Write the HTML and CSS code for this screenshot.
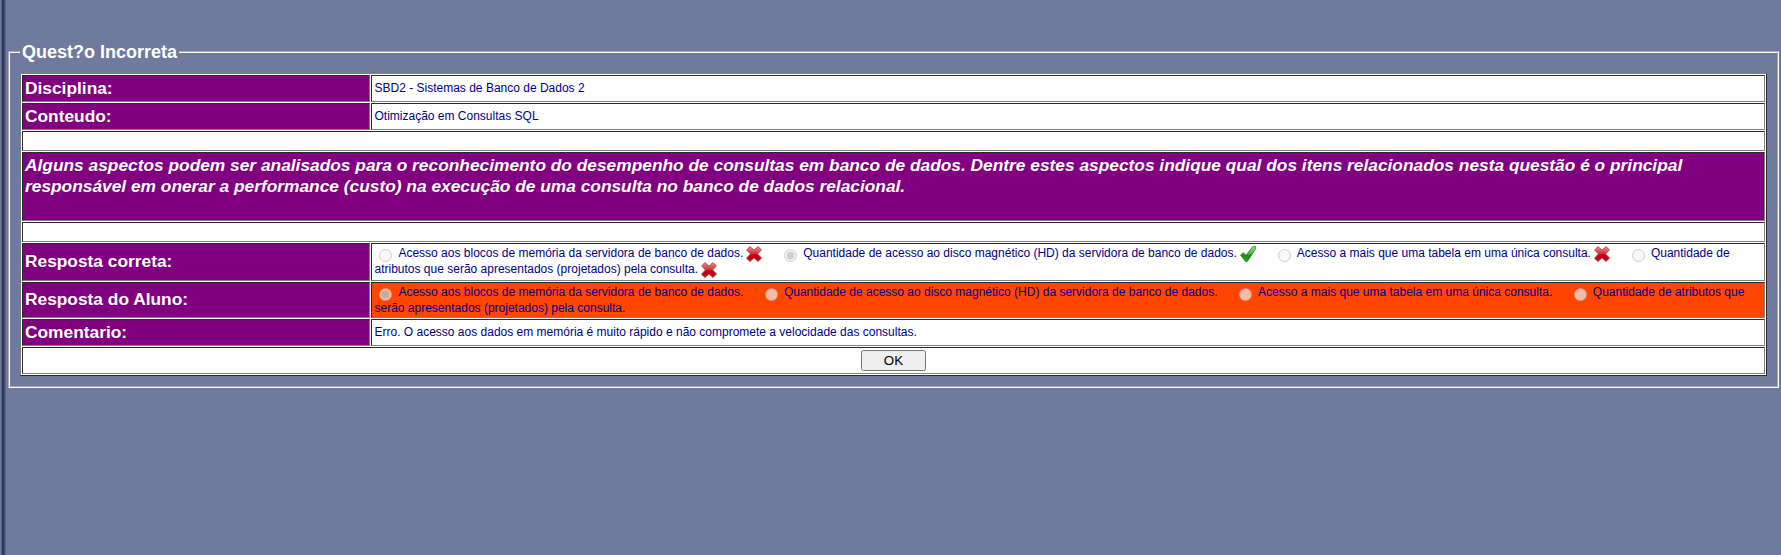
FILE: index.html
```html
<!DOCTYPE html>
<html lang="pt-BR">
<head>
<meta charset="utf-8">
<title>Questão Incorreta</title>
<link rel="stylesheet" href="styles.css">
</head>
<body>
<svg class="defs" aria-hidden="true">
  <defs>
    <linearGradient id="red" x1="0" y1="0" x2="0" y2="1"><stop offset="0" stop-color="#f08a8a"/><stop offset=".45" stop-color="#d8343c"/><stop offset=".55" stop-color="#c40010"/><stop offset="1" stop-color="#c80812"/></linearGradient>
    <linearGradient id="green" x1="0" y1="0" x2="0" y2="1"><stop offset="0" stop-color="#9adf92"/><stop offset=".5" stop-color="#3fb52e"/><stop offset=".6" stop-color="#109400"/><stop offset="1" stop-color="#21a812"/></linearGradient>
    <symbol id="cross" viewBox="0 0 16 16"><path d="M4 .6 8 4 12 .6 15.5 3.8 11.6 8 15.6 12 12 15.6 8 12 4 15.6.4 12.2 4.4 8 .5 3.9Z" fill="url(#red)" stroke="#8c5656" stroke-width=".8" stroke-linejoin="round"/></symbol>
    <symbol id="check" viewBox="0 0 16 16"><path d="M.5 9 3.4 6.6 6 9.2 12.8.6 15.7.5 15.6 3 7.4 15.4 5.4 15.4Z" fill="url(#green)" stroke="#4c7048" stroke-width=".8" stroke-linejoin="round"/></symbol>
  </defs>
</svg>
<form class="page">
  <fieldset class="panel">
    <legend class="title">Quest?o Incorreta</legend>
    <table class="grid">
      <colgroup><col class="col-label"><col></colgroup>
      <tr><td class="label">Disciplina:</td><td>SBD2 - Sistemas de Banco de Dados 2</td></tr>
      <tr><td class="label">Conteudo:</td><td>Otimização em Consultas SQL</td></tr>
      <tr class="spacer"><td colspan="2"></td></tr>
      <tr class="question"><td class="label" colspan="2">Alguns aspectos podem ser analisados para o reconhecimento do desempenho de consultas em banco de dados. Dentre estes aspectos indique qual dos itens relacionados nesta questão é o principal responsável em onerar a performance (custo) na execução de uma consulta no banco de dados relacional.</td></tr>
      <tr class="spacer"><td colspan="2"></td></tr>
      <tr class="correct"><td class="label">Resposta correta:</td><td class="options"><input class="radio" type="radio" disabled>&nbsp;Acesso aos blocos de memória da servidora de banco de dados.&nbsp;<svg class="mark"><use href="#cross"/></svg>&nbsp;&nbsp;&nbsp;&nbsp; <input class="radio" type="radio" disabled checked>&nbsp;Quantidade de acesso ao disco magnético (HD) da servidora de banco de dados.&nbsp;<svg class="mark"><use href="#check"/></svg>&nbsp;&nbsp;&nbsp;&nbsp; <input class="radio" type="radio" disabled>&nbsp;Acesso a mais que uma tabela em uma única consulta.&nbsp;<svg class="mark"><use href="#cross"/></svg>&nbsp;&nbsp;&nbsp;&nbsp; <input class="radio" type="radio" disabled>&nbsp;Quantidade de<br>atributos que serão apresentados (projetados) pela consulta.&nbsp;<svg class="mark"><use href="#cross"/></svg></td></tr>
      <tr class="student"><td class="label">Resposta do Aluno:</td><td class="options wrong"><input class="radio" type="radio" disabled checked>&nbsp;Acesso aos blocos de memória da servidora de banco de dados.&nbsp;&nbsp;&nbsp;&nbsp; <input class="radio" type="radio" disabled>&nbsp;Quantidade de acesso ao disco magnético (HD) da servidora de banco de dados.&nbsp;&nbsp;&nbsp;&nbsp; <input class="radio" type="radio" disabled>&nbsp;Acesso a mais que uma tabela em uma única consulta.&nbsp;&nbsp;&nbsp;&nbsp; <input class="radio" type="radio" disabled>&nbsp;Quantidade de atributos que<br>serão apresentados (projetados) pela consulta.</td></tr>
      <tr><td class="label">Comentario:</td><td>Erro. O acesso aos dados em memória é muito rápido e não compromete a velocidade das consultas.</td></tr>
      <tr><td class="actions" colspan="2"><button class="ok" type="button">OK</button></td></tr>
    </table>
  </fieldset>
</form>
</body>
</html>
```

FILE: styles.css
```css
html {
  min-height: 100%;
  background: linear-gradient(90deg, #6f7a9c 0 1px, #59627f 1px 2px, #2f3757 2px 4px, #49527a 4px 5px, #5c658b 5px 6px, #707a9e 6px);
}
body {
  margin: 0;
  font-family: "Liberation Sans", Arial, sans-serif;
  font-size: 12px;
  color: #00008b;
}
.defs { position: absolute; width: 0; height: 0; }
.page { padding: 42px 2px 0 8px; }
.panel {
  margin: 0;
  padding: 11px 10px 10px;
  border: 2px groove #fffaf2;
}
.title {
  padding: 0 2px;
  font-size: 18px;
  line-height: 20px;
  font-weight: bold;
  color: #fff;
}
.grid {
  width: 100%;
  table-layout: fixed;
  border: 1px solid;
  border-color: #808080 #2c2c2c #2c2c2c #808080;
  border-spacing: 1px;
  background: #fff;
}
.col-label { width: 348px; }
.grid td {
  box-sizing: border-box;
  height: 27px;
  padding: 0 2px 2px 2.5px;
  border: 1px solid;
  border-color: #2c2c2c #808080 #808080 #2c2c2c;
  vertical-align: middle;
}
.grid .label {
  padding: 0 2px;
  background: #800080;
  color: #fff;
  font-size: 17.33px;
  line-height: 21px;
  font-weight: bold;
}
.grid .spacer td { height: 20px; }
.grid .question td {
  height: 69px;
  padding-top: 2px;
  font-style: italic;
  vertical-align: top;
}
.grid .correct td { height: 38px; }
.grid .student td { height: 36px; }
.grid .correct .label,
.grid .student .label { padding-bottom: 2px; }
.grid .options {
  padding: 1px 2px 1px 2.5px;
  line-height: 16px;
  vertical-align: top;
  white-space: nowrap;
}
.grid .wrong { background: #ff4500; }
.radio {
  width: 13px;
  height: 13px;
  margin: 0 2.8px -5px 4.8px;
  vertical-align: -5px;
}
.mark {
  width: 16px;
  height: 16px;
  margin: 0 .5px -4px -.5px;
  vertical-align: -4px;
  position: relative;
  top: -3px;
}
.grid .actions { padding: 0; text-align: center; }
.ok {
  width: 65px;
  height: 21px;
  padding: 0;
  font-family: "Liberation Sans", Arial, sans-serif;
  font-size: 13.333px;
  vertical-align: middle;
}
```
